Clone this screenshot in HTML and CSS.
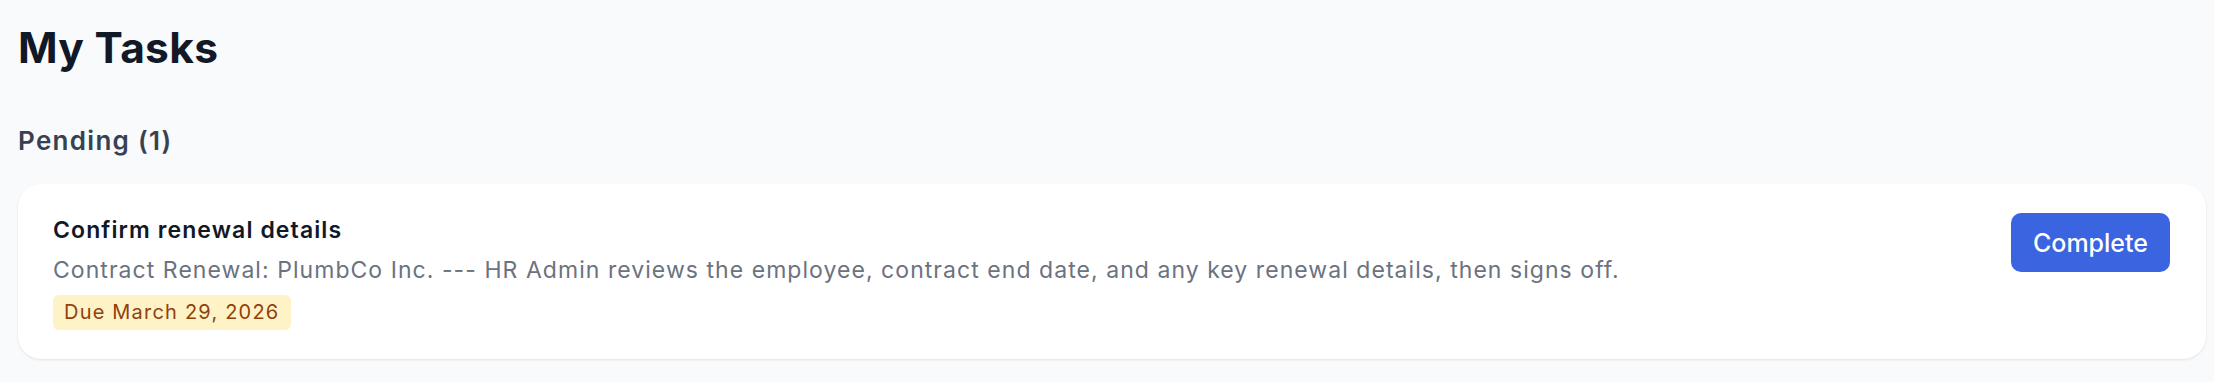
FILE: index.html
```html
<!DOCTYPE html>
<html lang="en">

<head>
    <meta charset="UTF-8">
    <meta name="viewport" content="width=device-width, initial-scale=1.0">
    <title>My Tasks</title>
    <link rel="stylesheet" href="styles.css">
</head>

<body>
    <div class="page">
        <h1 class="page-title">My Tasks</h1>

        <section class="task-group">
            <h2 class="group-title">Pending (1)</h2>

            <ul class="task-list">
                <li class="task-card">
                    <div class="task-info">
                        <h3 class="task-name">Confirm renewal details</h3>
                        <p class="task-desc">Contract Renewal: PlumbCo Inc. --- HR Admin reviews the employee, contract end date, and any key renewal details, then signs off.</p>
                        <span class="due-badge">Due March 29, 2026</span>
                    </div>
                    <button class="complete-btn">Complete</button>
                </li>
            </ul>
        </section>
    </div>
</body>

</html>
```

FILE: styles.css
```css
* {
    box-sizing: border-box;
}

body {
    margin: 0;
    background: #f9fafb;
    font-family: Inter, "Noto Sans", sans-serif;
    color: #111827;
}

.page {
    padding: 22px 8px 20px 18px;
}

.page-title {
    margin: 0 0 48px;
    font-size: 42.5px;
    line-height: 51px;
    font-weight: 700;
    letter-spacing: 0.3px;
    color: #111827;
}

.group-title {
    margin: 0 0 23px;
    font-size: 26px;
    line-height: 40px;
    font-weight: 600;
    letter-spacing: 1.3px;
    color: #374151;
}

.task-list {
    list-style: none;
    margin: 0;
    padding: 0;
}

.task-card {
    display: flex;
    justify-content: space-between;
    align-items: flex-start;
    gap: 24px;
    padding: 29px 36px 29px 35px;
    background: #fff;
    border-radius: 23px;
    box-shadow: 0 1px 3px rgba(0, 0, 0, 0.07), 0 1px 2px rgba(0, 0, 0, 0.03);
}

.task-info {
    display: flex;
    flex-direction: column;
    align-items: flex-start;
}

.task-name {
    margin: 0;
    font-size: 23px;
    line-height: 34px;
    font-weight: 600;
    letter-spacing: 1.1px;
    color: #111827;
}

.task-desc {
    margin: 6px 0 8px;
    font-size: 23px;
    line-height: 34px;
    letter-spacing: 1.05px;
    color: #6b7280;
}

.due-badge {
    display: inline-block;
    padding: 3px 12px 3px 11px;
    font-size: 20px;
    line-height: 29px;
    letter-spacing: 1.2px;
    color: #92400e;
    background: #fef3c7;
    border-radius: 6px;
}

.complete-btn {
    flex-shrink: 0;
    height: 59px;
    padding: 0 22px;
    border: none;
    border-radius: 10px;
    background: #3b64e0;
    color: #fff;
    font-family: inherit;
    font-size: 25px;
    font-weight: 500;
    cursor: pointer;
}
```
